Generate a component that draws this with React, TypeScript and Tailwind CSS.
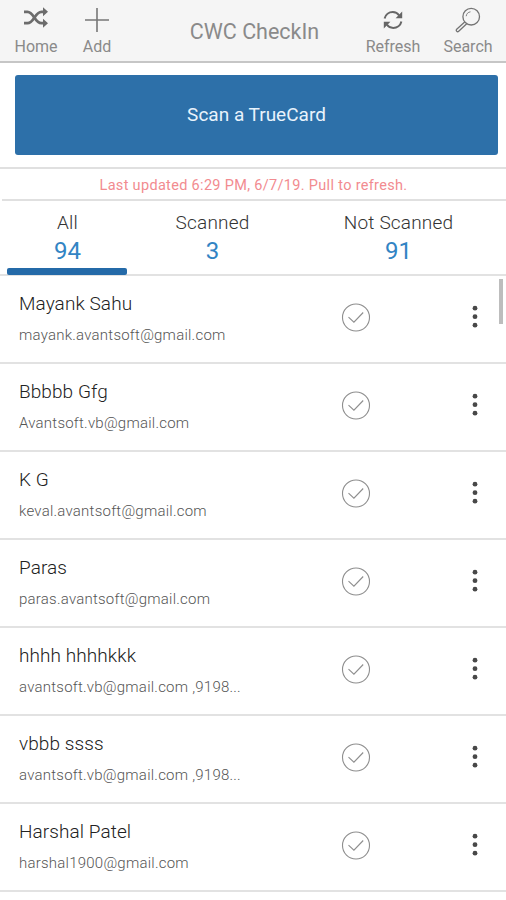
import React from "react";

const people = [
  { name: "Mayank Sahu", email: "mayank.avantsoft@gmail.com" },
  { name: "Bbbbb Gfg", email: "Avantsoft.vb@gmail.com" },
  { name: "K G", email: "keval.avantsoft@gmail.com" },
  { name: "Paras", email: "paras.avantsoft@gmail.com" },
  { name: "hhhh hhhhkkk", email: "avantsoft.vb@gmail.com ,9198..." },
  { name: "vbbb ssss", email: "avantsoft.vb@gmail.com ,9198..." },
  { name: "Harshal Patel", email: "harshal1900@gmail.com" },
];

const tabs = [
  { label: "All", count: 94, width: "w-[135px]" },
  { label: "Scanned", count: 3, width: "w-[155px]" },
  { label: "Not Scanned", count: 91, width: "w-[217px]" },
];

function ShuffleIcon() {
  return (
    <svg className="mb-[3px]" width="26" height="22" viewBox="0 0 26 22" fill="none" stroke="#6c6c6c" strokeWidth="2.7">
      <path d="M1 4.800h3.500c3 0 4.700 2.500 6.800 5.700 2.200 3.500 4 5.700 7.200 5.700h2" />
      <path d="M1 16.200h3.500c3 0 4.700-2.200 6.800-5.500 2.200-3.500 4-5.900 7.200-5.900h2" />
      <path d="m20 .3 5 4.500-5 4.500ZM20 11.700l5 4.500-5 4.500Z" fill="#6c6c6c" stroke="none" />
    </svg>
  );
}

function PlusIcon() {
  return (
    <svg width="26" height="26" viewBox="0 0 26 26" stroke="#777" strokeWidth="1.6">
      <path d="M13 1v24M1 13h24" />
    </svg>
  );
}

function RefreshIcon() {
  return (
    <svg width="20" height="20" viewBox="0 0 20 20" fill="none" stroke="#666" strokeWidth="2">
      <path d="M1.600 8.500C2.500 4.500 6 2.100 9.800 2.100c2.700 0 4.900 1.200 6.400 3.400" />
      <path d="M18.400 11.500c-.9 4-4.400 6.400-8.200 6.400-2.700 0-4.900-1.200-6.400-3.400" />
      <path d="M19.200 1.600v6.600h-6.600ZM.8 18.400v-6.600h6.600Z" fill="#666" stroke="none" />
    </svg>
  );
}

function SearchIcon() {
  return (
    <svg width="26" height="26" viewBox="0 0 26 26" fill="none" stroke="#747474" strokeWidth="1.300">
      <circle cx="16.200" cy="9.700" r="8.300" />
      <path d="M11.200 9.200c.3-2.500 1.800-4 4.300-4.400" strokeWidth=".9" />
      <path d="m9.700 15-8 7.300c-.7.700-.6 1.200 0 1.900.7.700 1.300.7 2 0l8-7.500" />
    </svg>
  );
}

function CheckIcon() {
  return (
    <svg width="30" height="30" viewBox="0 0 30 30" fill="none" stroke="#8e8e8e" strokeWidth="1.100">
      <circle cx="15" cy="15.500" r="13.500" />
      <path d="m7.500 15.200 5.400 5 9.300-9.700" />
    </svg>
  );
}

function DotsIcon() {
  return (
    <svg width="6" height="24" viewBox="0 0 6 24" fill="#484848">
      <circle cx="3" cy="3.200" r="2.400" />
      <circle cx="3" cy="11.700" r="2.400" />
      <circle cx="3" cy="20.200" r="2.400" />
    </svg>
  );
}

function Action({ label, icon, width }: { label: string; icon: React.ReactNode; width: string }) {
  return (
    <button className={`flex flex-col items-center ${width}`}>
      <span className="flex h-[39px] items-center justify-center">{icon}</span>
      <span className="text-[16px] leading-4 text-[#8a8a8a]">{label}</span>
    </button>
  );
}

export default function App() {
  return (
    <div className="flex h-[900px] w-[506px] flex-col overflow-hidden bg-white font-['Roboto',sans-serif] whitespace-nowrap">
      <header className="flex h-[63px] shrink-0 border-b-2 border-[#c6c6c6] bg-[#f5f5f5]">
        <Action label="Home" icon={<ShuffleIcon />} width="w-[72px]" />
        <Action label="Add" icon={<PlusIcon />} width="w-[50px]" />
        <h1 className="flex-1 pt-[20px] pl-[32px] text-center text-[21.500px] leading-6 font-normal text-[#8a8a8a]">CWC CheckIn</h1>
        <Action label="Refresh" icon={<RefreshIcon />} width="w-[76px]" />
        <Action label="Search" icon={<SearchIcon />} width="w-[74px]" />
        <div className="w-px" />
      </header>

      <div className="h-[106px] shrink-0 border-b-2 border-[#e0e0e0] pt-3 pr-2 pl-[15px]">
        <button className="h-[80px] w-full rounded-[3px] bg-[#2d70a9] pt-px text-[19px] text-[#e9f3fc]">Scan a TrueCard</button>
      </div>

      <p className="ml-[2px] h-8 shrink-0 border-b-2 border-[#e0e0e0] pr-px text-center text-[14.500px] leading-[33px] tracking-[0.32px] text-[#f28b90]">
        Last updated 6:29 PM, 6/7/19. Pull to refresh.
      </p>

      <nav className="relative flex h-[75px] shrink-0 border-b-2 border-[#e2e2e2]">
        {tabs.map((t) => (
          <button key={t.label} className={`flex shrink-0 flex-col items-center pt-[10px] ${t.width}`}>
            <span className="text-[19px] leading-6 font-light tracking-[0.2px] text-[#333]">{t.label}</span>
            <span className="mt-[2px] text-[24px] leading-7 text-[#3284c4]">{t.count}</span>
          </button>
        ))}
        <span className="absolute top-[67px] left-[7px] h-[7px] w-[120px] rounded-[2px] bg-[#246aa8]" />
      </nav>

      <main className="relative flex-1">
        {people.map((p) => (
          <div key={p.name} className="flex h-[88px] border-b-2 border-[#e2e2e2]">
            <div className="w-[341px] pt-[16px] pl-[19px]">
              <div className="text-[19px] leading-6 font-light tracking-[0.08px] text-[#222]">{p.name}</div>
              <div className="mt-[9px] text-[15px] leading-5 font-light tracking-[0.23px] text-[#555]">{p.email}</div>
            </div>
            <div className="pt-[26px]"><CheckIcon /></div>
            <button className="mt-[29px] ml-[101px] h-6"><DotsIcon /></button>
          </div>
        ))}
        <span className="absolute top-[3px] right-[3px] h-[45px] w-[4px] bg-[#bdbdbd]" />
      </main>
    </div>
  );
}
